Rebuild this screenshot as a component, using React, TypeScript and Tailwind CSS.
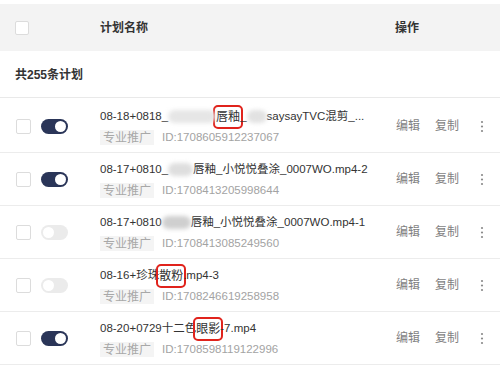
import React from 'react';

type Part = { text?: string; blur?: { w: number; tone: string }; mark?: string };

type Plan = {
  on: boolean;
  parts: Part[];
  id: string;
};

const plans: Plan[] = [
  {
    on: true,
    parts: [
      { text: '08-18+0818_' },
      { blur: { w: 48, tone: 'bg-[#e6e6e6]' } },
      { mark: '唇釉' },
      { text: '_' },
      { blur: { w: 20, tone: 'bg-[#e2e2e2]' } },
      { text: 'saysayTVC混剪_...' },
    ],
    id: '1708605912237067',
  },
  {
    on: true,
    parts: [
      { text: '08-17+0810_' },
      { blur: { w: 25, tone: 'bg-[#dedede]' } },
      { text: '唇釉_小悦悦叠涂_0007WO.mp4-2' },
    ],
    id: '1708413205998644',
  },
  {
    on: false,
    parts: [
      { text: '08-17+0810' },
      { blur: { w: 29, tone: 'bg-[#cfcfcf]' } },
      { text: '唇釉_小悦悦叠涂_0007WO.mp4-1' },
    ],
    id: '1708413085249560',
  },
  {
    on: false,
    parts: [{ text: '08-16+珍珠' }, { mark: '散粉' }, { text: '.mp4-3' }],
    id: '1708246619258958',
  },
  {
    on: true,
    parts: [{ text: '08-20+0729十二色' }, { mark: '眼影' }, { text: '-7.mp4' }],
    id: '1708598119122996',
  },
];

const Checkbox = ({ size = 'w-[15px] h-[15px]' }: { size?: string }) => (
  <span className={`${size} block bg-white border border-[#dcdcdc] rounded-[2px]`} />
);

const Toggle = ({ on }: { on: boolean }) => (
  <span
    className={`relative block w-[27px] h-[15px] rounded-full ${on ? 'bg-[#2a3558]' : 'bg-[#ebebeb]'}`}
  >
    <span
      className={`absolute top-[2px] w-[11px] h-[11px] rounded-full bg-white ${on ? 'right-[2px]' : 'left-[2px]'}`}
    />
  </span>
);

const Kebab = () => (
  <svg width="4" height="13" viewBox="0 0 4 13" className="text-[#8a8a8a]">
    <circle cx="2" cy="2" r="1.1" fill="currentColor" />
    <circle cx="2" cy="6.5" r="1.1" fill="currentColor" />
    <circle cx="2" cy="11" r="1.1" fill="currentColor" />
  </svg>
);

const Title = ({ parts }: { parts: Part[] }) => (
  <div className="flex items-center h-[18px] text-[11.5px] text-[#333] whitespace-nowrap">
    {parts.map((p, i) => {
      if (p.blur)
        return (
          <span
            key={i}
            className={`inline-block h-[13px] rounded-full blur-[2px] ${p.blur.tone}`}
            style={{ width: p.blur.w }}
          />
        );
      if (p.mark)
        return (
          <span
            key={i}
            className="inline-block text-[12px] outline-2 outline-solid outline-[#e0231c] outline-offset-[1px] rounded-[2px]"
          >
            {p.mark}
          </span>
        );
      return <span key={i}>{p.text}</span>;
    })}
  </div>
);

export default function App() {
  return (
    <div
      className="w-[500px] h-[374px] bg-white overflow-hidden pt-[4px]"
      style={{ fontFamily: '"Liberation Sans", "Noto Sans CJK SC", sans-serif' }}
    >
      {/* Header */}
      <div className="flex items-center h-[47px] bg-[#f3f3f3] text-[12px] font-semibold text-[#333]">
        <div className="w-[100px] pl-[15px] pt-[1px]">
          <Checkbox size="w-[14px] h-[14px]" />
        </div>
        <div className="w-[295px]">计划名称</div>
        <div>操作</div>
      </div>

      {/* Summary */}
      <div className="flex items-center h-[47px] pl-[15px] pt-[1px] border-b border-[#e9e9e9] text-[12px] font-bold text-[#333]">
        共255条计划
      </div>

      <div className="mt-[2px]">
        {plans.map((plan) => (
          <div key={plan.id} className="flex items-center h-[53px] border-b border-[#ececec]">
            <div className="w-[100px] flex items-center pl-[16px] gap-[10px]">
              <Checkbox />
              <Toggle on={plan.on} />
            </div>
            <div className="w-[295px] flex flex-col gap-[3px] pt-[2px]">
              <Title parts={plan.parts} />
              <div className="flex items-center gap-[8px] text-[11.5px] text-[#a3a3a3]">
                <span className="h-[15px] px-[3px] flex items-center text-[12px] bg-[#f4f4f4] text-[#a8a8a8]">专业推广</span>
                <span>ID:{plan.id}</span>
              </div>
            </div>
            <div className="flex items-center text-[12px] text-[#7f7f7f]">
              <span className="ml-[1px]">编辑</span>
              <span className="ml-[15px]">复制</span>
              <span className="ml-[21px]">
                <Kebab />
              </span>
            </div>
          </div>
        ))}
      </div>
    </div>
  );
}
